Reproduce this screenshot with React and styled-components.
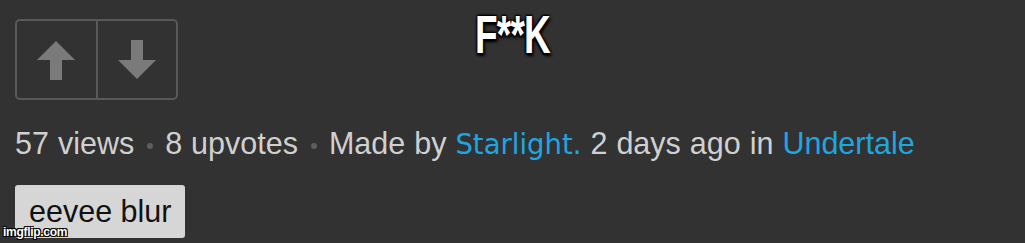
import React from "react";
import styled, { createGlobalStyle } from "styled-components";

const Global = createGlobalStyle`
  html, body {
    margin: 0;
    padding: 0;
    background: #323232;
  }
`;

const Page = styled.div`
  position: relative;
  width: 1025px;
  height: 243px;
  overflow: hidden;
  box-sizing: border-box;
  padding: 19px 15px 0;
  background: #323232;
  font-family: "Liberation Sans", Arial, sans-serif;
`;

const CaptionBar = styled.div`
  position: absolute;
  top: 9px;
  left: 0;
  right: 0;
  display: flex;
  justify-content: center;
`;

const Caption = styled.span`
  display: inline-block;
  font-family: Impact, "Liberation Sans", sans-serif;
  font-weight: 700;
  font-size: 44px;
  line-height: 44px;
  letter-spacing: -1px;
  color: #fff;
  text-shadow: 2px 2px 3px #000, -1px -1px 2px #000, 1px -1px 2px #000, -1px 1px 2px #000;
  transform: scale(0.84, 1.2);
  transform-origin: center top;
`;

const VoteGroup = styled.div`
  display: flex;
  width: 163px;
  height: 81px;
  box-sizing: border-box;
  border: 2px solid #595959;
  border-radius: 5px;
`;

const VoteButton = styled.button`
  flex: 1;
  display: flex;
  align-items: center;
  justify-content: center;
  padding: 0;
  background: transparent;
  border: none;
  border-left: ${(p) => (p.$divider ? "2px solid #595959" : "none")};
  cursor: pointer;
`;

const Meta = styled.div`
  margin-top: 26px;
  font-size: 30.5px;
  line-height: 34px;
  word-spacing: 0.5px;
  color: #d0d0d0;
  white-space: nowrap;
`;

const Dot = styled.span`
  display: inline-block;
  width: 6px;
  height: 6px;
  margin: 0 12px 0 13px;
  border-radius: 50%;
  background: #5e5e5e;
  vertical-align: middle;
`;

const Link = styled.a`
  color: #1fa6e0;
  text-decoration: none;
  font-family: ${(p) => (p.$user ? '"DejaVu Sans", Verdana, sans-serif' : "inherit")};
  font-size: ${(p) => (p.$user ? "27.5px" : "inherit")};
`;

const Tag = styled.div`
  display: inline-block;
  margin-top: 24px;
  padding: 9px 14px 10px 14px;
  font-size: 30.5px;
  line-height: 34px;
  color: #111;
  background: #d6d6d6;
  border-radius: 3px;
`;

const Watermark = styled.div`
  position: absolute;
  left: 3px;
  bottom: 4px;
  font-family: "Liberation Sans", Arial, sans-serif;
  font-weight: 700;
  font-size: 12px;
  letter-spacing: -0.3px;
  color: #fff;
  text-shadow: 1px 1px 0 #000, -1px -1px 0 #000, 1px -1px 0 #000, -1px 1px 0 #000;
`;

const Arrow = ({ down }) => (
  <svg width="40" height="40" viewBox="0 0 40 40" style={down ? { transform: "rotate(180deg)" } : undefined}>
    <path d="M20 1 L39 20 L26 20 L26 40 L14 40 L14 20 L1 20 Z" fill="#7a7a7a" />
  </svg>
);

export default function App() {
  return (
    <Page>
      <Global />
      <CaptionBar>
        <Caption>F**K</Caption>
      </CaptionBar>
      <VoteGroup>
        <VoteButton>
          <Arrow />
        </VoteButton>
        <VoteButton $divider>
          <Arrow down />
        </VoteButton>
      </VoteGroup>
      <Meta>
        57 views<Dot />8 upvotes<Dot />Made by <Link $user>Starlight.</Link> 2 days ago in{" "}
        <Link>Undertale</Link>
      </Meta>
      <Tag>eevee blur</Tag>
      <Watermark>imgflip.com</Watermark>
    </Page>
  );
}
